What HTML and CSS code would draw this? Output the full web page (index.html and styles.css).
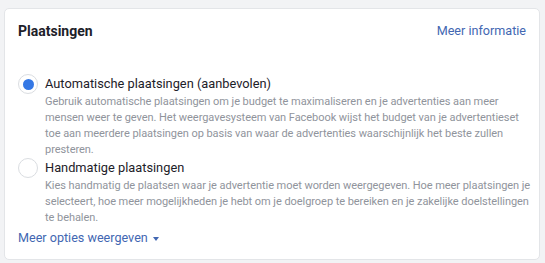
FILE: index.html
```html
<!DOCTYPE html>
<html lang="nl">
<head>
<meta charset="UTF-8">
<title>Plaatsingen</title>
<link rel="stylesheet" href="styles.css">
</head>
<body>

<div class="card">
    <div class="card-header">
        <h2>Plaatsingen</h2>
        <a href="#" class="link">Meer informatie</a>
    </div>

    <div class="option">
        <span class="radio checked"></span>
        <div class="option-text">
            <div class="option-label">Automatische plaatsingen (aanbevolen)</div>
            <p class="option-desc">Gebruik automatische plaatsingen om je budget te maximaliseren en je advertenties aan meer<br>
            mensen weer te geven. Het weergavesysteem van Facebook wijst het budget van je advertentieset<br>
            toe aan meerdere plaatsingen op basis van waar de advertenties waarschijnlijk het beste zullen<br>
            presteren.</p>
        </div>
    </div>

    <div class="option">
        <span class="radio"></span>
        <div class="option-text">
            <div class="option-label">Handmatige plaatsingen</div>
            <p class="option-desc">Kies handmatig de plaatsen waar je advertentie moet worden weergegeven. Hoe meer plaatsingen je<br>
            selecteert, hoe meer mogelijkheden je hebt om je doelgroep te bereiken en je zakelijke doelstellingen<br>
            te behalen.</p>
        </div>
    </div>

    <a href="#" class="link more">Meer opties weergeven <span class="caret"></span></a>
</div>

</body>
</html>
```

FILE: styles.css
```css
body {
    background-color: #f2f3f5;
    font-family: Roboto, "Liberation Sans", sans-serif;
    margin: 0;
    padding: 8px 5px 4px 4px;
}
.card {
    background-color: #fff;
    border: 1px solid #e3e5e8;
    border-radius: 5px;
    padding: 12px 13px 13px 13px;
}
.card-header {
    display: flex;
    justify-content: space-between;
    align-items: center;
    height: 19px;
    margin-bottom: 35px;
}
.card-header h2 {
    margin: 0;
    font-size: 14px;
    font-weight: bold;
    color: #1d2129;
}
.link {
    color: #4267b2;
    font-size: 12.6px;
    text-decoration: none;
}
.option {
    display: flex;
    gap: 7px;
    margin-bottom: 1px;
}
.radio {
    flex: none;
    width: 18px;
    height: 18px;
    border: 1px solid #dadde1;
    border-radius: 50%;
    background-color: #fff;
    display: flex;
    justify-content: center;
    align-items: center;
    margin-top: -1px;
}
.radio.checked::after {
    content: "";
    width: 11px;
    height: 11px;
    border-radius: 50%;
    background-color: #3578e5;
}
.option-text {
    flex: 1;
    min-width: 0;
}
.option-label {
    font-size: 12.8px;
    line-height: 18px;
    color: #1d2129;
}
.option-desc {
    margin: 1px 0 0;
    font-size: 11px;
    letter-spacing: -0.05px;
    line-height: 16px;
    color: #90949c;
    white-space: nowrap;
}
.more {
    display: inline-block;
    margin-top: 0;
    line-height: 16px;
}
.caret {
    display: inline-block;
    width: 0;
    height: 0;
    border-left: 3.5px solid transparent;
    border-right: 3.5px solid transparent;
    border-top: 4px solid #4267b2;
    vertical-align: middle;
    margin-left: 2px;
}
```
